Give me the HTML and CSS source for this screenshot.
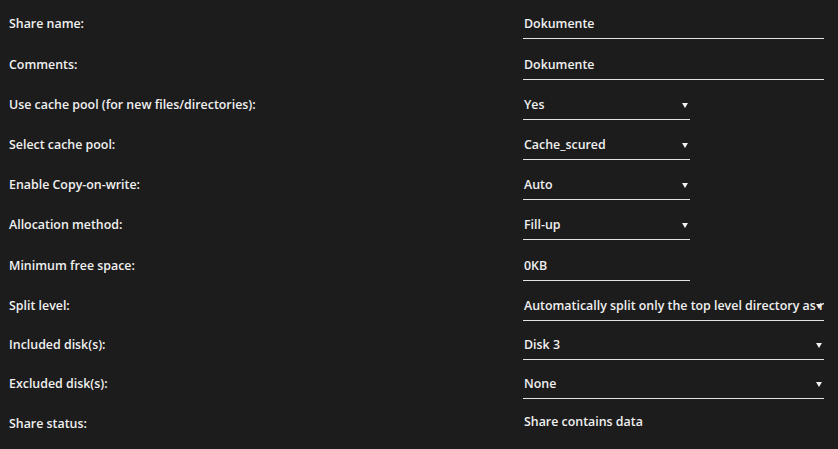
FILE: index.html
```html
<!DOCTYPE html>
<html lang="en">
<head>
    <meta charset="UTF-8">
    <title>Share Settings</title>
    <link rel="stylesheet" href="styles.css">
</head>
<body>
    <div class="share-form">
        <div class="row tall">
            <div class="label">Share name:</div>
            <div class="field"><div class="input wide">Dokumente</div></div>
        </div>
        <div class="row">
            <div class="label">Comments:</div>
            <div class="field"><div class="input wide">Dokumente</div></div>
        </div>
        <div class="row">
            <div class="label">Use cache pool (for new files/directories):</div>
            <div class="field"><div class="input select">Yes</div></div>
        </div>
        <div class="row">
            <div class="label">Select cache pool:</div>
            <div class="field"><div class="input select">Cache_scured</div></div>
        </div>
        <div class="row">
            <div class="label">Enable Copy-on-write:</div>
            <div class="field"><div class="input select">Auto</div></div>
        </div>
        <div class="row tall">
            <div class="label">Allocation method:</div>
            <div class="field"><div class="input select">Fill-up</div></div>
        </div>
        <div class="row">
            <div class="label">Minimum free space:</div>
            <div class="field"><div class="input">0KB</div></div>
        </div>
        <div class="row short">
            <div class="label">Split level:</div>
            <div class="field"><div class="input select wide">Automatically split only the top level directory as required</div></div>
        </div>
        <div class="row short">
            <div class="label">Included disk(s):</div>
            <div class="field"><div class="input select wide">Disk 3</div></div>
        </div>
        <div class="row">
            <div class="label">Excluded disk(s):</div>
            <div class="field"><div class="input select wide">None</div></div>
        </div>
        <div class="row">
            <div class="label">Share status:</div>
            <div class="field"><div class="status">Share contains data</div></div>
        </div>
    </div>
</body>
</html>
```

FILE: styles.css
```css
* {
    margin: 0;
    padding: 0;
    box-sizing: border-box;
}

body {
    background-color: #1c1c1c;
    color: #f0f0f0;
    font-family: "Open Sans", "Noto Sans", sans-serif;
    font-size: 12.4px;
    font-weight: 600;
}

.share-form {
    padding: 4px 14px 0 9px;
}

.row {
    display: grid;
    grid-template-columns: 514px 1fr;
    align-items: center;
    height: 40px;
}

.row.tall {
    height: 41px;
    padding-bottom: 1px;
}

.row.short {
    height: 39px;
}

.label {
    padding-bottom: 1px;
}

.input {
    position: relative;
    width: 167px;
    height: 30px;
    line-height: 29px;
    padding-left: 1px;
    border-bottom: 1px solid #e4e4e4;
    white-space: nowrap;
    overflow: hidden;
}

.input.wide {
    width: 301px;
}

.select {
    padding-right: 7px;
}

.select::after {
    content: "";
    position: absolute;
    right: 2px;
    top: 13px;
    border-left: 3px solid transparent;
    border-right: 3px solid transparent;
    border-top: 5px solid #f0f0f0;
}

.status {
    height: 30px;
    line-height: 29px;
    padding-left: 1px;
    margin-top: -4px;
}
```
